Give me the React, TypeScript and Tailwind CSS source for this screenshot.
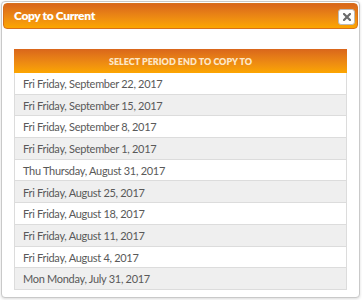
import React from "react";

const dates = [
  "Fri Friday, September 22, 2017",
  "Fri Friday, September 15, 2017",
  "Fri Friday, September 8, 2017",
  "Fri Friday, September 1, 2017",
  "Thu Thursday, August 31, 2017",
  "Fri Friday, August 25, 2017",
  "Fri Friday, August 18, 2017",
  "Fri Friday, August 11, 2017",
  "Fri Friday, August 4, 2017",
  "Mon Monday, July 31, 2017",
];

export default function App() {
  return (
    <div
      className="w-[362px] h-[300px] bg-white overflow-hidden"
      style={{ fontFamily: 'Lato, "Open Sans", sans-serif' }}
    >
      <div className="ml-[1px] mt-[1px] w-[359px] h-[297px] border border-[#c9c9c9] rounded-[4px] p-[1px] bg-white shadow-[0_1px_3px_rgba(0,0,0,0.15)]">
        {/* title bar */}
        <div className="h-[26px] rounded-[4px] border border-[#d7701c] bg-gradient-to-b from-[#d9661b] to-[#fca600] flex items-center justify-between pl-[10px] pr-[2px]">
          <span className="text-white text-[12px] tracking-[-0.35px] font-extrabold">
            Copy to Current
          </span>
          <button className="w-[17px] h-[16px] mt-[2px] bg-white border border-[#bbb] rounded-[3px] flex items-center justify-center">
            <svg width="8" height="8" viewBox="0 0 8 8">
              <path
                d="M1 1L7 7M7 1L1 7"
                stroke="#6b6b6b"
                strokeWidth="2.2"
                strokeLinecap="square"
              />
            </svg>
          </button>
        </div>

        {/* table */}
        <div className="mt-[20px] ml-[11px] w-[333px]">
          <div className="h-[24px] bg-gradient-to-b from-[#d9661b] to-[#fca600] flex items-center justify-center pt-[1px] text-[9px] font-extrabold text-[#fde7c6] uppercase">
            Select period end to copy to
          </div>
          {dates.map((d, i) => (
            <div
              key={d}
              className={`h-[21.7px] border-x border-b border-[#dcdcdc] flex items-center pl-[8px] pt-[2px] text-[11px] tracking-[-0.3px] text-[#595959] ${
                i % 2 === 1 ? "bg-[#efefef]" : "bg-white"
              }`}
            >
              {d}
            </div>
          ))}
        </div>
      </div>
    </div>
  );
}
